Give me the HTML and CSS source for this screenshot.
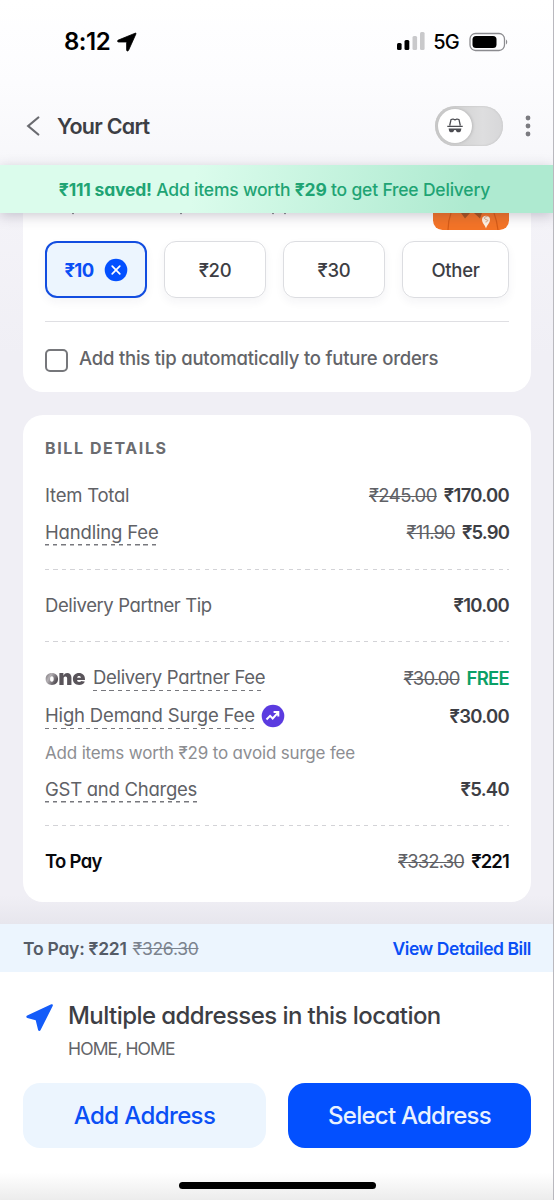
FILE: index.html
```html
<!DOCTYPE html>
<html lang="en">
<head>
<meta charset="utf-8">
<title>Your Cart</title>
<link rel="stylesheet" href="styles.css">
</head>
<body>
<div class="screen">
  <header class="top">
    <div class="status">
      <span class="time">8:12</span>
      <svg class="loc" width="20" height="20" viewBox="0 0 20 20"><path stroke="#000" stroke-width=".8" stroke-linejoin="round" d="M18.200 1.200 1.300 8.100c-1.200.5-.9 1.900.3 1.900h7.600c.3 0 .4.1.4.4v7.500c0 1.300 1.500 1.500 2 .3L18.900 2c.300-.700-.100-1.100-.700-.800Z"/></svg>
      <svg class="signal" width="29" height="19" viewBox="0 0 29 19"><rect x="1" y="11" width="4.600" height="7" rx="1.500"/><rect x="8.500" y="8" width="4.800" height="10" rx="1.500"/><rect class="off" x="16.500" y="4" width="4.600" height="14" rx="1.500"/><rect class="off" x="24" y="0" width="4.600" height="18" rx="1.500"/></svg>
      <span class="net">5G</span>
      <svg class="battery" width="40" height="20" viewBox="0 0 40 20"><rect class="shell" x="1" y="1.500" width="34.500" height="17" rx="5.500"/><rect x="3.500" y="4" width="24" height="12" rx="3.500"/><path class="nub" d="M37 7.500c1.600.7 1.600 4.300 0 5Z"/></svg>
    </div>
    <div class="nav">
      <svg class="back" width="14" height="20" viewBox="0 0 14 20"><path d="M12.300 1.500 2.200 10l10.100 8.500"/></svg>
      <h1>Your Cart</h1>
      <div class="toggle"><div class="knob">
        <svg width="18" height="16" viewBox="0 0 18 16"><path class="hat" d="M3.700 7.500 5 1.600 7 1l2 .8L11 1l2 .6 1.300 5.900M1.300 8.300h15.400"/><path class="specs" d="M2.600 10.400h12.800l-.5 2.300c-.5 2-4.300 2-4.800 0l-.5-.8H8.400l-.5.8c-.5 2-4.300 2-4.800 0Z"/></svg>
      </div></div>
      <svg class="dots" width="6" height="22" viewBox="0 0 6 22"><circle cx="3" cy="3" r="2.400"/><circle cx="3" cy="11" r="2.400"/><circle cx="3" cy="19" r="2.400"/></svg>
    </div>
  </header>
  <div class="banner"><span><b>₹111 saved!</b> Add items worth <b>₹29</b> to get Free Delivery</span></div>
  <main class="content">
    <section class="card tips">
      <div class="tip-head">
        <svg class="specks" width="242" height="3" viewBox="0 0 242 3"><path d="M27 0h2l-1 1.500ZM135 0h2l-1 1.500ZM227 0h2l-1 1.500ZM239 0h2l-1 1.500Z"/></svg>
        <svg class="art" width="76" height="17" viewBox="0 0 76 17"><path class="shirt" d="M0 0h76v7.500a9.500 9.500 0 0 1-9.500 9.500h-57A9.500 9.500 0 0 1 0 7.500Z"/><path class="fold" d="M18 0q-3 8-3 17M61 0q3 8 4 17"/><path class="collar" d="M28 0h9l-5 5.500ZM41 0h8l-2 5.500Z"/><path class="pin" d="M49 6.500c0-5 8-5 8 0 0 4-3 5-4 9-1-4-4-5-4-9Z"/><path class="mark" d="M54.500 3.500c-4 0-4 3 0 3.500 1 1-1 2-2 2"/></svg>
      </div>
      <div class="chips">
        <div class="chip chosen"><span>₹10</span><svg width="24" height="24" viewBox="0 0 24 24"><circle cx="12" cy="12" r="11.300"/><path d="m8.200 8.200 7.600 7.600m0-7.600-7.600 7.600"/></svg></div>
        <div class="chip">₹20</div>
        <div class="chip">₹30</div>
        <div class="chip">Other</div>
      </div>
      <div class="auto"><i class="box"></i><span>Add this tip automatically to future orders</span></div>
    </section>
    <section class="card bill">
      <h2>BILL DETAILS</h2>
      <div class="row"><span class="label l-item">Item Total</span><span class="amount"><s>₹245.00</s><b>₹170.00</b></span></div>
      <div class="row"><span class="label more l-handling">Handling Fee</span><span class="amount"><s class="narrow">₹11.90</s><b class="narrow">₹5.90</b></span></div>
      <div class="rule first"></div>
      <div class="row"><span class="label">Delivery Partner Tip</span><span class="amount"><b>₹10.00</b></span></div>
      <div class="rule"></div>
      <div class="row tall"><span class="one">one</span><span class="label more l-fee">Delivery Partner Fee</span><span class="amount"><s class="narrow">₹30.00</s><b class="free">FREE</b></span></div>
      <div class="row tall"><span class="label more l-surge">High Demand Surge Fee</span><svg class="surge" width="24" height="24" viewBox="0 0 24 24"><circle cx="12" cy="12" r="11.300"/><path d="m5.500 15.500 3.600-3.600 2.600 2.600 5.300-5.800M12.600 7.900h4.700v4.700"/></svg><span class="amount"><b>₹30.00</b></span></div>
      <div class="note"><span>Add items worth ₹29 to avoid surge fee</span></div>
      <div class="row"><span class="label more l-gst">GST and Charges</span><span class="amount"><b>₹5.40</b></span></div>
      <div class="rule"></div>
      <div class="row total"><span class="label">To Pay</span><span class="amount"><s class="narrow">₹332.30</s><b class="narrow">₹221</b></span></div>
    </section>
  </main>
  <div class="paybar"><span class="due"><b>To Pay: ₹221</b><s>₹326.30</s></span><a class="detail">View Detailed Bill</a></div>
  <footer class="foot">
    <div class="place">
      <svg class="arrow" width="29" height="29" viewBox="0 0 29 29"><path d="M26.300 1.300 2.200 12.500c-1.200.600-1.200 2 .1 2.400l8.400 2.300 2.400 9.700c.4 1.500 1.900 1.500 2.500.2L27.800 2.700c.4-1-.5-1.900-1.500-1.400Z"/></svg>
      <div><div class="title">Multiple addresses in this location</div><div class="sub">HOME, HOME</div></div>
    </div>
    <div class="actions"><div class="btn add"><span>Add Address</span></div><div class="btn select"><span>Select Address</span></div></div>
    <div class="home"><i></i></div>
  </footer>
</div>
</body>
</html>
```
FILE: styles.css
```css
* { box-sizing: border-box; }
body { margin: 0; }
.screen {
  width: 554px; height: 1200px; display: flex; flex-direction: column; overflow: hidden;
  border-right: 1px solid #b9b8be; background: #f0eff5;
  font-family: Inter, "Noto Sans", sans-serif; font-feature-settings: "cv11"; color: #3d3e44;
  white-space: nowrap;
}
svg { display: block; flex: none; }
h1, h2 { margin: 0; }
b { font-weight: 600; }

.top { height: 165px; flex: none; background: linear-gradient(#fff, #fcfcfe 50%, #f7f7fa); }
.status { height: 83px; padding: 0 44px 0 64px; display: flex; align-items: center; color: #000; }
.time { font-size: 24px; font-weight: 600; letter-spacing: -.5px; width: 53px; }
.signal { margin-left: auto; }
.signal .off { fill: #c9c9cb; }
.net { margin: 0 10px 0 8px; font-size: 20px; font-weight: 500; letter-spacing: -.8px; }
.battery .shell { fill: none; stroke: #8b8b8f; stroke-width: 1.300; }
.battery .nub { fill: #8b8b8f; }

.nav { height: 82px; padding: 3px 22px 0 26px; display: flex; align-items: center; }
.back path { fill: none; stroke: #6a6b70; stroke-width: 2.200; stroke-linecap: round; }
h1 { margin-left: 17px; font-size: 21.500px; font-weight: 600; letter-spacing: -.75px; }
.toggle { margin-left: auto; width: 68px; height: 40px; padding: 3px; border-radius: 20px; background: linear-gradient(90deg, #c9c9c9, #dededf 70%, #d7d7d9); box-shadow: inset 0 0 2px #bbb; }
.knob { width: 34px; height: 34px; border-radius: 50%; background: #fff; display: grid; place-items: center; box-shadow: 1px 0 3px rgba(0,0,0,.15); }
.hat { fill: none; stroke: #4c4d52; stroke-width: 1.300; stroke-linejoin: round; }
.specs { fill: #4c4d52; }
.dots { margin-left: 22px; fill: #7b7b80; }

.banner {
  height: 48px; flex: none; display: grid; place-items: center; position: relative; z-index: 1;
  padding-right: 4px; background: linear-gradient(100deg, #dbfcec 35%, #aeead0 85%); box-shadow: 0 3px 12px rgba(60,50,80,.25);
  color: #1fa474; font-size: 17.500px; font-weight: 500; letter-spacing: -.2px;
}
.banner b { font-weight: 700; }

.content { flex: 1; padding: 0 22px 21px 23px; display: flex; flex-direction: column; gap: 23px; background: linear-gradient(#f4f3f8, #f0eff5 20%, #f0eff5 96%, #e7e6ed); }
.card { background: #fff; padding: 0 22px; border-radius: 20px; }
.tips { height: 179px; border-radius: 0 0 20px 20px; }
.tip-head { height: 28px; display: flex; justify-content: space-between; align-items: flex-start; }
.specks { fill: #55565b; }
.art .shirt { fill: #f47427; }
.art .fold { fill: none; stroke: #d65b17; stroke-width: 1.200; }
.art .collar { fill: #a7531f; }
.art .pin { fill: #fff3e3; }
.art .mark { fill: none; stroke: #dca37c; stroke-width: 1; }
.chips { display: grid; grid-template-columns: 102px 102px 102px 1fr; gap: 17px; height: 57px; }
.chip { border: 1.500px solid #dcdde1; border-radius: 12px; display: flex; align-items: center; justify-content: center; box-shadow: 0 4px 10px rgba(40,40,80,.05); font-size: 18.500px; font-weight: 500; letter-spacing: -.3px; }
.chosen { border: 2px solid #124de0; background: #ecf5fe; color: #0a4ff5; font-weight: 700; gap: 10px; letter-spacing: -.6px; }
.chosen circle { fill: #0350ff; }
.chosen path { stroke: #fff; stroke-width: 1.700; stroke-linecap: round; fill: none; }
.auto { margin-top: 23px; height: 71px; padding-top: 2px; border-top: 1.500px solid #dfdfe3; display: flex; align-items: center; font-size: 18.500px; font-weight: 500; color: #636468; letter-spacing: -.22px; }
.box { width: 23px; height: 23px; margin: 4px 11px 0 0; border: 2px solid #76777b; border-radius: 5px; }

.bill { height: 487px; padding-top: 20px; }
h2 { height: 28px; line-height: 27px; margin-bottom: 14px; font-size: 16px; font-weight: 700; letter-spacing: 1.600px; color: #6b6c70; }
.row { height: 37px; display: flex; align-items: center; font-size: 18.500px; }
.tall { height: 38px; }
.label { color: #606166; letter-spacing: -.4px; line-height: 25px; padding-bottom: 1px; }
.l-item { letter-spacing: -.22px; }
.l-handling { letter-spacing: -.17px; }
.l-fee { letter-spacing: -.33px; }
.l-surge { letter-spacing: -.17px; }
.l-gst { letter-spacing: -.26px; }
.more { background: repeating-linear-gradient(90deg, #77787d 0 4.300px, transparent 4.300px 8.200px) 0 100%/100% 1.500px no-repeat; }
.amount { margin-left: auto; display: flex; gap: 7px; letter-spacing: -.7px; padding-bottom: 1px; }
.amount s { color: #606166; text-decoration-thickness: 1.300px; letter-spacing: -.57px; }
.amount .narrow { letter-spacing: -.85px; }
.free { color: #0aa066; }
.rule { height: 1px; margin: 17px 0; background: repeating-linear-gradient(90deg, #d3d3d7 0 4.300px, transparent 4.300px 8.400px); }
.rule.first { margin-top: 18px; }
.one { width: 48px; font-size: 22px; line-height: 24px; padding-bottom: 3px; font-weight: 900; letter-spacing: -.4px; color: transparent; background: linear-gradient(120deg, #5f5a5e 5%, #b5b1b5 18%, #59545a 32%); background-clip: text; -webkit-background-clip: text; }
.surge { margin-left: 6px; fill: #5b3be0; }
.surge path { fill: none; stroke: #fff; stroke-width: 2; }
.note { height: 36px; display: flex; align-items: center; font-size: 17px; color: #8d8e92; letter-spacing: -.17px; }
.total .label, .total b { color: #08090d; font-weight: 600; }
.total .label { letter-spacing: -.7px; }

.paybar { height: 48px; flex: none; padding: 0 22px 0 23px; display: flex; align-items: center; justify-content: space-between; background: #ecf5fe; font-size: 17.500px; color: #555c67; letter-spacing: -.4px; }
.due { display: flex; gap: 6px; letter-spacing: -.25px; }
.due s { color: #7b838e; }
.detail { color: #0a4ff5; font-weight: 600; letter-spacing: -.45px; }
.foot { height: 228px; flex: none; padding: 31px 22px 0 23px; display: flex; flex-direction: column; background: linear-gradient(#fff 88%, #ececec); }
.place { display: flex; height: 80px; }
.arrow { margin: 0 14px 0 2px; fill: #145cf9; }
.title { font-size: 24px; line-height: 26px; font-weight: 500; letter-spacing: -.56px; }
.sub { margin-top: 8px; font-size: 17.500px; line-height: 24px; color: #636468; letter-spacing: -.88px; }
.actions { display: grid; grid-template-columns: 1fr 1fr; gap: 22px; height: 65px; }
.btn { border-radius: 17px; display: grid; place-items: center; font-size: 24px; font-weight: 500; letter-spacing: -.6px; }
.add { background: #ecf5fe; color: #0a4ff5; }
.select { background: #0350ff; color: #e8f1ff; letter-spacing: -.75px; }
.home { padding-top: 34px; display: flex; justify-content: center; }
.home i { width: 197px; height: 7px; border-radius: 4px; background: #000; }
```
